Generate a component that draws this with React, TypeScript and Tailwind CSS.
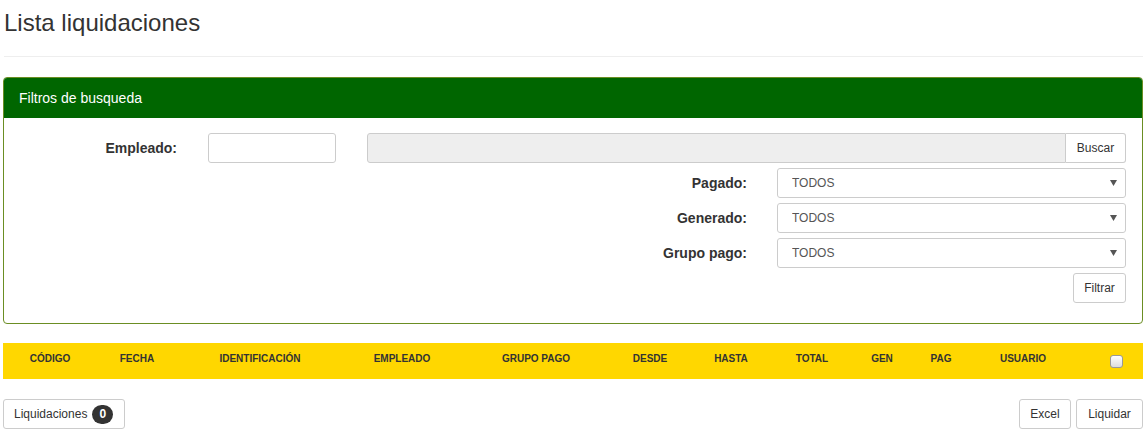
import React from 'react';

const columns = [
  { label: 'CÓDIGO', w: 'w-[94px]' },
  { label: 'FECHA', w: 'w-[80px]' },
  { label: 'IDENTIFICACIÓN', w: 'w-[166px]' },
  { label: 'EMPLEADO', w: 'w-[118px]' },
  { label: 'GRUPO PAGO', w: 'w-[150px]' },
  { label: 'DESDE', w: 'w-[78px]' },
  { label: 'HASTA', w: 'w-[84px]' },
  { label: 'TOTAL', w: 'w-[78px]' },
  { label: 'GEN', w: 'w-[62px]' },
  { label: 'PAG', w: 'w-[56px]' },
  { label: 'USUARIO', w: 'w-[108px]' },
];

const selectFilters = ['Pagado:', 'Generado:', 'Grupo pago:'];

const SelectBox: React.FC = () => (
  <div className="relative w-[349px] h-[30px]">
    <select className="appearance-none w-full h-full border border-[#ccc] rounded-[3px] bg-white pl-[14px] text-[12px] text-[#555] outline-none">
      <option>TODOS</option>
    </select>
    <svg className="absolute right-[9px] top-[12px] pointer-events-none" width="7" height="6" viewBox="0 0 7 6">
      <path d="M0 0 L7 0 L3.5 6 Z" fill="#555" />
    </svg>
  </div>
);

const App: React.FC = () => {
  return (
    <div className="font-['Liberation_Sans',Arial,sans-serif] text-[#333] bg-white min-h-[433px] pl-[3px] pr-[4px]">
      <div className="pt-[10px] pb-[20px] border-b border-[#eee] ml-[1px]">
        <h1 className="text-[24px] leading-[26px] font-normal text-[#333]">Lista liquidaciones</h1>
      </div>

      <div className="mt-[20px] border border-[#6b8e23] rounded-[4px] overflow-hidden">
        <div className="bg-[#006600] px-[15px] py-[10px] text-[14px] leading-[20px] text-white">
          Filtros de busqueda
        </div>
        <div className="pl-[15px] pr-[16px] pt-[15px] pb-[20px] flex flex-col gap-[5px]">
          <div className="flex items-center">
            <label className="w-[158px] text-right text-[14px] font-bold">Empleado:</label>
            <input className="ml-[31px] w-[128px] h-[30px] border border-[#ccc] rounded-[3px] bg-white outline-none" />
            <div className="ml-[31px] flex flex-1 h-[30px]">
              <input
                disabled
                className="flex-1 h-full border border-[#ccc] rounded-l-[3px] bg-[#eee] outline-none"
              />
              <button className="h-full w-[60px] border border-l-0 border-[#ccc] rounded-r-[3px] bg-white text-[12px] text-[#333]">
                Buscar
              </button>
            </div>
          </div>
          {selectFilters.map((label) => (
            <div key={label} className="flex items-center justify-end">
              <label className="text-[14px] font-bold mr-[30px]">{label}</label>
              <SelectBox />
            </div>
          ))}
          <div className="flex justify-end">
            <button className="h-[30px] w-[53px] border border-[#ccc] rounded-[3px] bg-white text-[12px] text-[#333]">
              Filtrar
            </button>
          </div>
        </div>
      </div>

      <div className="mt-[19px] h-[36px] bg-[#ffd700] flex">
        {columns.map((c) => (
          <div
            key={c.label}
            className={`${c.w} h-full flex items-center justify-center pb-[6px] text-[10px] font-bold text-[#333]`}
          >
            {c.label}
          </div>
        ))}
        <div className="w-[66px] h-full flex items-center justify-end pr-[20px] pt-[1px]">
          <span className="block w-[13px] h-[13px] border border-[#999] rounded-[3px] bg-gradient-to-b from-[#fff] to-[#ddd]" />
        </div>
      </div>

      <div className="mt-[20px] flex items-center justify-between">
        <button className="h-[30px] w-[122px] pl-[10px] border border-[#ccc] rounded-[3px] bg-white text-[12px] text-[#333] flex items-center gap-[5px]">
          Liquidaciones
          <span className="inline-flex items-center justify-center h-[19px] min-w-[21px] px-[7px] rounded-[10px] bg-[#333] text-white text-[12px] font-bold">
            0
          </span>
        </button>
        <div className="flex gap-[5px]">
          <button className="h-[30px] w-[52px] border border-[#ccc] rounded-[3px] bg-white text-[12px] text-[#333]">
            Excel
          </button>
          <button className="h-[30px] w-[67px] border border-[#ccc] rounded-[3px] bg-white text-[12px] text-[#333]">
            Liquidar
          </button>
        </div>
      </div>
    </div>
  );
};

export default App;
